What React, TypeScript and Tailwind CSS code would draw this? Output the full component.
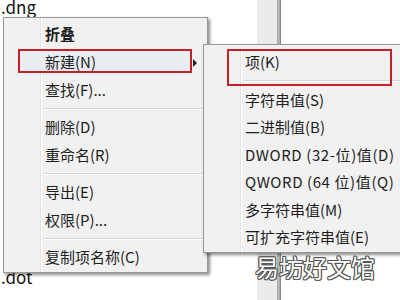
import React from "react";

const font = { fontFamily: '"Noto Sans CJK SC", "Liberation Sans", sans-serif' };

function Item({ label, bold = false }: { label: string; bold?: boolean }) {
  return (
    <div className={`h-[28px] flex items-center pl-[41px] text-[15px] text-[#1e1e1e] ${bold ? "font-bold" : ""}`}>
      {label}
    </div>
  );
}

function Sep({ h = 9 }: { h?: number }) {
  return (
    <div className={`flex items-center pl-[39px] pr-[3px] ${h === 9 ? "h-[9px]" : "h-[10px]"}`}>
      <div className="h-px w-full bg-[#d7d7d7] border-b border-white box-content" />
    </div>
  );
}

function SubItem({ label, h, wide = false }: { label: string; h: string; wide?: boolean }) {
  return (
    <div className={`${h} flex items-center pl-[41px] text-[15px] text-[#1e1e1e] whitespace-nowrap ${wide ? "tracking-[0.6px]" : ""}`}>
      {label}
    </div>
  );
}

export default function App() {
  return (
    <div className="relative w-[400px] h-[300px] overflow-hidden bg-white" style={font}>
      {/* background window */}
      <div className="flex h-full">
        <div className="w-[257px] flex flex-col justify-between text-[17px] leading-none text-[#111]">
          <div className="pl-[1px] -mt-[2px]">.dng</div>
          <div className="pl-[1px] flex flex-col">
            <span className="mb-[9px]">.dot</span>
            <span className="h-[6px] overflow-hidden leading-[12px] text-[15px]">.........</span>
          </div>
        </div>
        <div className="w-[20px] bg-[#ebebeb]" />
        <div className="w-[4px] bg-[#b0b0b0] border-r border-[#888]" />
        <div className="flex-1 bg-white" />
      </div>

      {/* main context menu */}
      <div className="absolute left-[3px] top-[17px] w-[205px] h-[256px] border border-[#979797] bg-[linear-gradient(to_right,#f1f1f1_36px,#e2e3e3_36px,#e2e3e3_37px,#ffffff_37px,#ffffff_38px,#f1f1f1_38px)] shadow-[2px_2px_3px_rgba(0,0,0,0.45)] pt-[2px]">
        <Item label="折叠" bold />
        <div className="relative h-[28px] flex items-center pl-[41px] text-[15px] text-[#1e1e1e]">
          <div className="absolute left-[14px] top-[1px] w-[174px] h-[24px] bg-[#e9ecf0] border-2 border-[#c4202a]" />
          <span className="relative">新建(N)</span>
          <div className="absolute left-[189px] top-[11px] w-0 h-0 border-y-[4px] border-y-transparent border-l-[4px] border-l-[#222]" />
        </div>
        <Item label="查找(F)..." />
        <Sep />
        <Item label="删除(D)" />
        <Item label="重命名(R)" />
        <Sep />
        <Item label="导出(E)" />
        <Item label="权限(P)..." />
        <Sep />
        <Item label="复制项名称(C)" />
      </div>

      {/* submenu */}
      <div className="absolute left-[203px] top-[44px] w-[210px] h-[209px] border border-[#979797] bg-[linear-gradient(to_right,#f1f1f1_36px,#e2e3e3_36px,#e2e3e3_37px,#ffffff_37px,#ffffff_38px,#f1f1f1_38px)] shadow-[2px_2px_3px_rgba(0,0,0,0.45)] pt-[3px]">
        <div className="relative h-[28px] flex items-center pl-[41px] text-[15px] text-[#1e1e1e]">
          <div className="absolute left-[23px] top-[1px] w-[165px] h-[37px] border-2 border-[#c4202a]" />
          <span className="relative">项(K)</span>
        </div>
        <Sep h={10} />
        <SubItem label="字符串值(S)" h="h-[28px]" />
        <SubItem label="二进制值(B)" h="h-[27px]" />
        <SubItem label="DWORD (32-位)值(D)" h="h-[28px]" wide />
        <SubItem label="QWORD (64 位)值(Q)" h="h-[27px]" wide />
        <SubItem label="多字符串值(M)" h="h-[28px]" />
        <SubItem label="可扩充字符串值(E)" h="h-[27px]" />
      </div>

      {/* watermark */}
      <div
        className="absolute left-[255px] top-[255px] text-[24px] leading-none text-white"
        style={{
          ...font,
          textShadow:
            "1px 0 #555, -1px 0 #555, 0 1px #555, 0 -1px #555, 1px 1px #555, -1px -1px #555, 1px -1px #555, -1px 1px #555",
        }}
      >
        易坊好文馆
      </div>
    </div>
  );
}
